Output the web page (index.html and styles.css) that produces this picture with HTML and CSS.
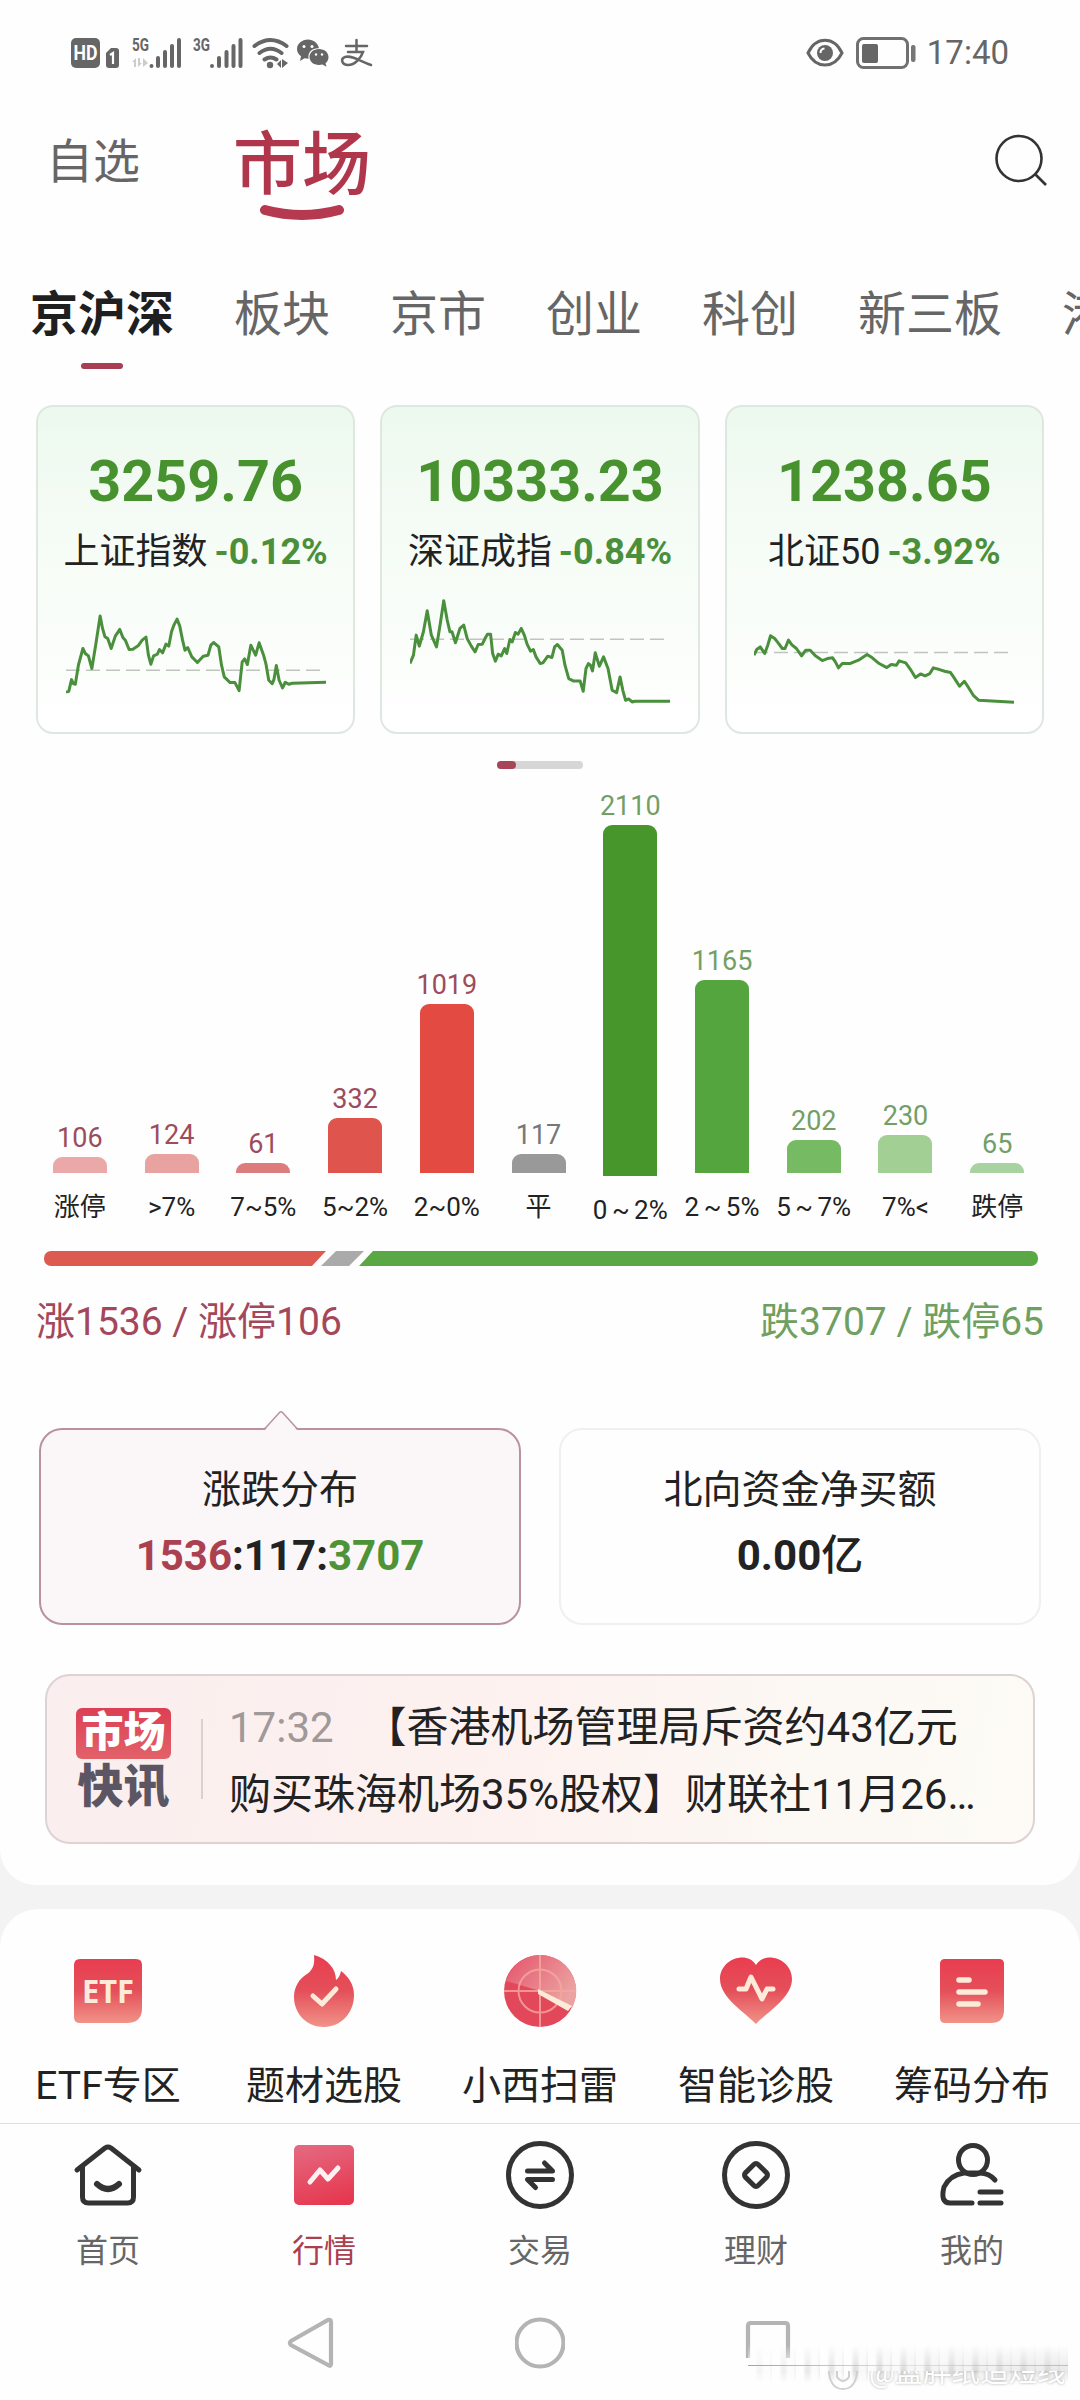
FILE: index.html
```html
<!DOCTYPE html>
<html lang="zh-CN">

<head>
    <meta charset="UTF-8">
    <meta name="viewport" content="width=device-width, initial-scale=1.0">
    <title>市场</title>
    <link rel="stylesheet" href="styles.css">
</head>

<body>
    <div class="panel">
        <div class="status">
            <svg class="status-left" width="320" height="36" viewBox="0 0 320 36">
                <rect x="1" y="3" width="29" height="30" rx="5" />
                <text class="hd" x="3.5" y="25" textLength="24" lengthAdjust="spacingAndGlyphs">HD</text>
                <path d="M36 18l5-5h5q3 0 3 3v14q0 3-3 3h-7q-3 0-3-3z" />
                <path d="M40 20l3-2v11" stroke="#fff" stroke-width="2.2" fill="none" />
                <text class="net" x="62" y="16" textLength="17" lengthAdjust="spacingAndGlyphs">5G</text>
                <path class="faint" d="M62 27l4-4v9h-2v-5zM68 23h2v5h2l-4 4zM73 23l5 5-5 4z" />
                <path class="bars" d="M81.500 31v0M88 23v8M95 17v14M102 11v20M109 5v26" />
                <text class="net" x="123" y="16" textLength="17" lengthAdjust="spacingAndGlyphs">3G</text>
                <path class="bars" d="M142 31v0M149 23v8M156.500 17v14M163.500 11v20M170.500 5v26" />
                <path class="wifi" d="M184.500 11q16-12 32 0M189.500 18q11-8.500 22 0M194.500 24.500q6-4 12 0" />
                <circle cx="200" cy="30" r="3.200" />
                <path d="M207 29l4-4v8zM212 24v9l6-5z" />
                <path d="M238 4.500c-6 0-11 4.300-11 9.500 0 3 1.500 5.500 4 7.300l-1 4.700 4.500-2.700 4 .5c-1-7 4-11 10.500-10.600-1-5-5.500-8.700-11-8.700z" />
                <path d="M249 14c-5.500 0-9.500 3.600-9.500 8s4 8 9.500 8l3.500-.6 4 2.400-1-3.600c2-1.500 3-3.600 3-6.200 0-4.400-4-8-9.500-8z" />
                <g fill="#fff">
                    <circle cx="234" cy="11.500" r="1.500" />
                    <circle cx="242" cy="11.500" r="1.500" />
                    <circle cx="246" cy="19.500" r="1.200" />
                    <circle cx="252" cy="19.500" r="1.200" />
                </g>
                <path class="pay" d="M276 11h21M286.500 5v12M278 17h15c-2 6-8 13-15 13-6 0-8-6-3-8 7-2 15 4 26 8" />
            </svg>
            <div class="status-right">
                <svg width="38" height="30" viewBox="0 0 38 30">
                    <path d="M2 15C10-2 28-2 36 15 28 31 10 31 2 15z" fill="none" stroke="#666" stroke-width="3" />
                    <circle cx="19" cy="15" r="8" fill="#666" />
                    <path d="M14.500 15q0-4 4-4.500" fill="none" stroke="#fff" stroke-width="2" />
                </svg>
                <svg class="battery" width="60" height="32" viewBox="0 0 60 32">
                    <rect x="1.500" y="1.500" width="50" height="29" rx="6" fill="none" stroke="#707070" stroke-width="3" />
                    <rect x="6" y="7" width="16" height="19" rx="2" fill="#666" />
                    <rect x="55" y="8" width="4.500" height="17" rx="2" fill="#777" />
                </svg>
                <span class="time">17:40</span>
            </div>
        </div>

        <div class="header">
            <a class="self">自选</a>
            <a class="market">市场
                <svg width="84" height="16" viewBox="0 0 84 16">
                    <path d="M5 5q37 10 74 0" fill="none" stroke="#b5394f" stroke-width="10" stroke-linecap="round" />
                </svg>
            </a>
            <svg class="search" width="50" height="50" viewBox="0 0 50 50">
                <circle cx="24" cy="23.500" r="22.500" />
                <path d="M40 39l11 11" />
            </svg>
        </div>

        <ul class="tabs">
            <li class="on">京沪深</li>
            <li>板块</li>
            <li>京市</li>
            <li>创业</li>
            <li>科创</li>
            <li>新三板</li>
            <li>港股</li>
        </ul>

        <div class="cards">
            <div class="card">
                <strong>3259.76</strong>
                <p>上证指数 <b>-0.12%</b></p>
                <svg viewBox="0 0 754 350" preserveAspectRatio="none">
                    <path class="dash" d="M0 240H754" />
                    <polyline points="0,305 8,303 16,268 21,280 27,282 36,225 49,175 56,190 65,197 75,235 86,165 99,78 106,115 113,140 121,145 131,175 143,138 156,118 165,142 172,150 183,178 194,177 210,166 221,150 232,141 239,195 246,222 254,197 265,192 271,178 280,188 290,162 298,168 306,125 313,105 322,87 330,108 338,150 345,180 353,172 365,200 381,217 398,198 412,195 420,165 428,157 443,170 451,225 459,260 476,277 490,277 502,301 511,215 518,206 526,223 536,165 550,195 560,158 573,195 580,222 588,270 598,280 603,268 610,226 618,270 628,293 636,276 646,282 656,279 754,276" />
                </svg>
            </div>
            <div class="card">
                <strong>10333.23</strong>
                <p>深证成指 <b>-0.84%</b></p>
                <svg viewBox="0 0 755 350" preserveAspectRatio="none">
                    <path class="dash" d="M0 147H755" />
                    <polyline points="0,220 10,195 18,135 27,168 39,125 50,62 62,135 77,170 88,100 98,32 108,90 116,125 122,125 132,158 145,115 156,105 166,145 178,168 189,185 198,163 210,162 218,145 225,132 234,132 240,190 248,213 256,192 265,197 275,175 281,190 290,148 297,155 306,127 314,132 323,115 332,135 340,162 350,183 358,178 366,200 378,220 386,218 400,198 412,202 420,170 428,163 442,180 450,225 461,265 474,272 494,272 503,303 511,235 518,220 524,225 530,242 538,188 550,228 562,200 575,235 587,300 600,307 610,260 618,300 626,330 635,326 645,335 653,333 755,333" />
                </svg>
            </div>
            <div class="card">
                <strong>1238.65</strong>
                <p>北证50 <b>-3.92%</b></p>
                <svg viewBox="0 0 754 350" preserveAspectRatio="none">
                    <path class="dash" d="M0 187H754" />
                    <polyline points="0,195 8,178 18,170 31,190 40,165 48,137 60,145 70,158 82,175 90,175 100,150 110,164 123,175 138,197 150,180 163,180 178,197 198,211 213,205 228,203 236,215 245,233 256,220 278,220 303,210 328,193 343,203 363,220 385,232 398,223 413,225 421,212 440,218 454,238 468,262 483,251 496,257 510,250 520,233 538,238 553,243 570,247 580,262 596,288 610,273 621,290 636,315 652,330 754,336" />
                </svg>
            </div>
        </div>
        <div class="pager"><i></i></div>

        <div class="chart">
            <div class="col up"><span>106</span><i style="height: 16px; background: #eaa8a8"></i><em>涨停</em></div>
            <div class="col up"><span>124</span><i style="height: 19px; background: #e8a3a1"></i><em>&gt;7%</em></div>
            <div class="col up"><span>61</span><i style="height: 10px; background: #dc7c7c"></i><em>7~5%</em></div>
            <div class="col up"><span>332</span><i style="height: 55px; background: #df544c"></i><em>5~2%</em></div>
            <div class="col up"><span>1019</span><i style="height: 169px; background: #e24a42"></i><em>2~0%</em></div>
            <div class="col flat"><span>117</span><i style="height: 19px; background: #999"></i><em>平</em></div>
            <div class="col down most"><span>2110</span><i style="height: 351px; background: #47962b"></i><em>0 ~ 2%</em></div>
            <div class="col down"><span>1165</span><i style="height: 193px; background: #55a53e"></i><em>2 ~ 5%</em></div>
            <div class="col down"><span>202</span><i style="height: 33px; background: #76bb64"></i><em>5 ~ 7%</em></div>
            <div class="col down"><span>230</span><i style="height: 38px; background: #a1cf94"></i><em>7%&lt;</em></div>
            <div class="col down"><span>65</span><i style="height: 10px; background: #a8d2a0"></i><em>跌停</em></div>
        </div>
        <div class="ratio">
            <i class="r-up"></i>
            <i class="r-flat"></i>
            <i class="r-down"></i>
        </div>
        <div class="summary">
            <span class="t-up">涨1536 / 涨停106</span>
            <span class="t-down">跌3707 / 跌停65</span>
        </div>

        <div class="boxes">
            <div class="box active">
                <svg class="peak" width="34" height="20" viewBox="0 0 34 20">
                    <path d="M1 20h32L17 2z" fill="#fbf6f8" />
                    <path d="M0 18.500h1L15.500 2.500q1.500-1.500 3 0L33 18.500h1" fill="none" stroke="#b8929d" stroke-width="1.500" />
                </svg>
                <p>涨跌分布</p>
                <strong><span class="c-red">1536</span>:117:<span class="c-green">3707</span></strong>
            </div>
            <div class="box">
                <p>北向资金净买额</p>
                <strong>0.00<span class="unit">亿</span></strong>
            </div>
        </div>

        <div class="news">
            <div class="news-logo">
                <b>市场</b>
                <span>快讯</span>
            </div>
            <p><time>17:32</time>【香港机场管理局斥资约43亿元<br>购买珠海机场35%股权】财联社11月26…</p>
        </div>
    </div>

    <div class="panel tools">
        <svg width="0" height="0" class="defs">
            <defs>
                <linearGradient id="red" x1="0" y1="0" x2="0" y2="1">
                    <stop offset="0" stop-color="#e93d50" />
                    <stop offset=".5" stop-color="#e4505a" />
                    <stop offset="1" stop-color="#f19389" />
                </linearGradient>
                <linearGradient id="nav" x1="0.300" y1="0" x2="0.600" y2="1">
                    <stop offset="0" stop-color="#e4677f" />
                    <stop offset="1" stop-color="#e6384f" />
                </linearGradient>
                <linearGradient id="scan" x1="0" y1="0" x2="1" y2="0.600">
                    <stop offset="0" stop-color="#e4536a" />
                    <stop offset="1" stop-color="#eba3a2" />
                </linearGradient>
            </defs>
        </svg>
        <a class="tool">
            <svg width="74" height="74" viewBox="0 0 74 74">
                <path d="M9 5h56q6 0 6 6v43q0 15-15 15H9q-6 0-6-6V11q0-6 6-6z" fill="url(#red)" />
                <text class="etf" x="11" y="49" textLength="52" lengthAdjust="spacingAndGlyphs">ETF</text>
            </svg>
            ETF专区
        </a>
        <a class="tool">
            <svg width="74" height="74" viewBox="0 0 74 74">
                <path d="M27 1c14 4 22 14 22 25 3-2 4-5 5-9 8 6 13 14 13 24 0 18-13 32-30 32S7 60 7 43c0-10 5-18 13-23 6-4 8-10 7-19z" fill="url(#red)" />
                <path d="M26 42l9 8 14-15" class="cream" stroke-width="5" />
            </svg>
            题材选股
        </a>
        <a class="tool">
            <svg width="74" height="74" viewBox="0 0 74 74">
                <circle cx="37" cy="37" r="36" fill="#e2475a" />
                <path d="M37 37L69 54A36 36 0 0 0 37 1 36 36 0 0 0 3 27z" fill="url(#scan)" />
                <g fill="none" stroke="#f5a9a0" stroke-width="2" opacity=".8">
                    <circle cx="37" cy="37" r="21.500" />
                    <path d="M1 37h72M37 1v72" />
                </g>
                <path d="M35 35l34 17-4 5-30-17z" fill="#fdebd9" />
            </svg>
            小西扫雷
        </a>
        <a class="tool">
            <svg width="74" height="74" viewBox="0 0 74 74">
                <path d="M37 70C27 59 1 44 1 25 1 5 28-4 37 11 46-4 73 5 73 25c0 19-26 34-36 45z" fill="url(#red)" />
                <path d="M20 35h7l5-12 11 22 5-10h6" class="cream" stroke-width="5" />
            </svg>
            智能诊股
        </a>
        <a class="tool">
            <svg width="74" height="74" viewBox="0 0 74 74">
                <path d="M10 5h54q5 0 5 5v46q0 13-13 13H10q-5 0-5-5V10q0-5 5-5z" fill="url(#red)" />
                <path d="M24 26h10M24 38h26M24 50h19" class="cream" stroke-width="5.500" />
            </svg>
            筹码分布
        </a>
    </div>

    <div class="tabbar">
        <a>
            <svg width="70" height="70" viewBox="0 0 70 70">
                <path d="M4 30L32 8q3-2 6 0l28 22M9.500 27v30q0 6 6 6h39q6 0 6-6V27" />
                <path d="M24 44q11 10 22 0" stroke-width="6" />
            </svg>
            首页
        </a>
        <a class="on">
            <svg width="70" height="70" viewBox="0 0 70 70">
                <rect x="5" y="5" width="60" height="60" rx="5" fill="url(#nav)" stroke="none" />
                <path d="M21 42l10-12 8 9 10-11" stroke="#fff0f2" stroke-width="5" />
            </svg>
            行情
        </a>
        <a>
            <svg width="70" height="70" viewBox="0 0 70 70">
                <circle cx="35" cy="35" r="31.500" />
                <path d="M22.500 31h25l-8-8M47.500 39.500h-25l8 8" />
            </svg>
            交易
        </a>
        <a>
            <svg width="70" height="70" viewBox="0 0 70 70">
                <circle cx="35" cy="35" r="31.500" />
                <rect x="26" y="26" width="18" height="18" rx="3" transform="rotate(45 35 35)" />
            </svg>
            理财
        </a>
        <a>
            <svg width="70" height="70" viewBox="0 0 70 70">
                <circle cx="36" cy="20" r="14.500" />
                <path d="M58 40Q52 33 43 33H27Q13 35 7 47 3 63 13 63H35M43 52h21M43 63h21" />
            </svg>
            我的
        </a>
    </div>

    <div class="sysnav">
        <svg width="50" height="56" viewBox="0 0 50 56"><path d="M5 26L42 5q3-1 3 2v42q0 3-3 1L5 30q-2-2 0-4z" /></svg>
        <svg width="50" height="56" viewBox="0 0 50 56"><circle cx="25" cy="28" r="23.500" /></svg>
        <svg width="50" height="56" viewBox="0 0 50 56"><path d="M4 43V11q0-3 3-3h34q3 0 3 3v32" /></svg>
        <div class="mark">
            <i></i>
            <svg width="32" height="34" viewBox="0 0 32 34"><path d="M2 4v12q2 16 14 16t14-16V4M10 4v16q6 8 12 0V4" /></svg>
            <span>@蓝胖纸追短线</span>
        </div>
    </div>
</body>

</html>
```
FILE: styles.css
```css
* {
    box-sizing: border-box;
}

body {
    margin: 0;
    width: 1080px;
    height: 2400px;
    overflow: hidden;
    background: #f3f3f3;
    color: #222;
    font-family: Roboto, "Noto Sans CJK SC", sans-serif;
}

p,
ul {
    margin: 0;
    padding: 0;
}

i,
em {
    font-style: normal;
}

svg {
    display: block;
}

.panel {
    background: #fefefe;
}

.panel:first-child {
    height: 1885px;
    border-radius: 0 0 36px 36px;
}

/* 状态栏 */
.status {
    display: flex;
    justify-content: space-between;
    align-items: center;
    height: 106px;
    padding: 0 71px 0 70px;
}

.status-left {
    overflow: visible;
    fill: #666;
}

.hd {
    fill: #fff;
    font-size: 20px;
    font-weight: 700;
}

.net {
    font-size: 18px;
    font-weight: 700;
}

.faint {
    fill: #ccc;
}

.bars,
.wifi,
.pay {
    fill: none;
    stroke: #666;
    stroke-width: 4;
    stroke-linecap: round;
}

.pay {
    stroke-width: 2.5;
}

.status-right {
    display: flex;
    align-items: center;
}

.battery {
    margin: 0 11px 0 12px;
}

.time {
    color: #666;
    font-size: 33px;
    line-height: 40px;
}

/* 顶部 */
.header {
    display: flex;
    align-items: center;
    height: 112px;
    padding: 0 35px 0 46px;
    color: #666;
    font-size: 47px;
}

.self {
    margin-top: -10px;
}

.market {
    position: relative;
    margin: 7px 0 0 93px;
    color: #b0364b;
    font-size: 69px;
    font-weight: 500;
    line-height: 80px;
}

.market svg {
    position: absolute;
    left: 27px;
    top: 79px;
}

.search {
    margin: -5px 0 0 auto;
    overflow: visible;
    fill: none;
    stroke: #333;
    stroke-width: 2.6;
}

.tabs {
    display: flex;
    gap: 60px;
    height: 187px;
    padding: 67px 0 0 30px;
    overflow: hidden;
    list-style: none;
    white-space: nowrap;
    color: #666;
    font-size: 48px;
    line-height: 60px;
}

.tabs .on {
    color: #1f1f1f;
    font-weight: 700;
}

.tabs .on::after {
    content: "";
    display: block;
    width: 42px;
    height: 6px;
    margin: 18px auto 0;
    border-radius: 3px;
    background: #a83e52;
}

/* 指数卡片 */
.cards {
    display: grid;
    grid-template-columns: repeat(3, 1fr);
    gap: 25px;
    padding: 0 36px;
}

.card {
    height: 329px;
    padding-top: 43px;
    border: 2px solid #dfe8e0;
    border-radius: 17px;
    background: linear-gradient(#ecf9ee, #f4fbf4 30%, #f9fdf9 65%, #fff);
    text-align: center;
}

.card strong {
    display: block;
    color: #47912f;
    font-size: 57.5px;
    line-height: 64px;
}

.card p {
    margin-top: 16px;
    font-size: 36px;
    line-height: 44px;
    white-space: nowrap;
}

.card b {
    margin-left: -2px;
    color: #4a8f3a;
}

.card svg {
    width: 260px;
    height: 117px;
    margin: 16px auto 0;
    fill: none;
}

.card polyline {
    stroke: #4a8f3c;
    stroke-width: 3;
    stroke-linejoin: round;
    vector-effect: non-scaling-stroke;
}

.dash {
    stroke: #bfc4bf;
    stroke-width: 1.5;
    stroke-dasharray: 14 6;
    vector-effect: non-scaling-stroke;
}

.pager {
    width: 86px;
    height: 8px;
    margin: 27px auto 0;
    border-radius: 4px;
    background: #d6d6d6;
}

.pager i {
    display: block;
    width: 19px;
    height: 8px;
    border-radius: 4px;
    background: #a9455a;
}

/* 涨跌分布 */
.chart {
    display: flex;
    align-items: flex-end;
    height: 456px;
    padding: 0 37px 0 34px;
}

.col {
    flex: 1;
    display: flex;
    flex-direction: column;
    align-items: center;
    white-space: nowrap;
}

.col span {
    margin-bottom: 3px;
    font-size: 27px;
    line-height: 31px;
}

.col i {
    width: 54px;
    border-radius: 9px 9px 0 0;
}

.col em {
    margin-top: 16px;
    font-size: 26px;
    line-height: 36px;
    word-spacing: -2px;
}

.up span {
    color: #9c4c5d;
}

.flat span {
    color: #777;
}

.down span {
    color: #739f66;
}

.most {
    margin-bottom: -3px;
}

.ratio {
    display: flex;
    height: 15px;
    margin: 26px 42px 0 44px;
}

.r-up {
    width: 282px;
    border-radius: 7px 0 0 7px;
    background: #dd5a51;
    clip-path: polygon(0 0, 100% 0, 268px 100%, 0 100%);
}

.r-flat {
    width: 43px;
    margin-left: -5px;
    background: #aaa;
    clip-path: polygon(15px 0, 100% 0, 28px 100%, 0 100%);
}

.r-down {
    flex: 1;
    margin-left: -5px;
    border-radius: 0 7px 7px 0;
    background: #5aa746;
    clip-path: polygon(14px 0, 100% 0, 100% 100%, 0 100%);
}

.summary {
    display: flex;
    justify-content: space-between;
    padding: 30px 36px 0;
    font-size: 39px;
    line-height: 52px;
}

.t-up {
    color: #a5475a;
}

.t-down {
    color: #6fa05f;
}

.boxes {
    display: grid;
    grid-template-columns: 1fr 1fr;
    gap: 38px;
    margin-top: 80px;
    padding: 0 39px;
}

.box {
    position: relative;
    height: 197px;
    padding-top: 32px;
    border: 2px solid #f0f0f0;
    border-radius: 23px;
    text-align: center;
}

.box p {
    font-size: 39px;
    line-height: 56px;
}

.box strong {
    display: block;
    margin-top: 8px;
    font-size: 42px;
    line-height: 60px;
}

.active {
    border-color: #b8929d;
    background: #fbf6f8;
}

.peak {
    position: absolute;
    left: 223px;
    top: -20px;
}

.c-red {
    color: #ab4150;
}

.c-green {
    color: #4f9339;
}

.unit {
    font-weight: 500;
}

.news {
    display: flex;
    align-items: center;
    height: 170px;
    margin: 49px 45px 0;
    padding-left: 29px;
    border: 2px solid #dfd2d4;
    border-radius: 25px;
    background: linear-gradient(100deg, #faeeee, #fdf2f0 50%, #fcf8f4 75%, #fdfbf5);
}

.news-logo {
    width: 95px;
    padding-top: 3px;
    text-align: center;
    font-weight: 900;
    font-size: 46px;
    line-height: 54px;
    color: #5c5664;
}

.news-logo b {
    display: block;
    height: 51px;
    border-radius: 6px;
    background: linear-gradient(#dc3f52, #e2626a);
    color: #fff;
    font-size: 42px;
    line-height: 50px;
}

.news-logo span {
    display: block;
}

.news p {
    margin-left: 30px;
    padding: 4px 0 0 28px;
    background: linear-gradient(#ddcfd0, #ddcfd0) 0 50% / 2px 80px no-repeat;
    font-size: 42px;
    line-height: 67px;
    white-space: nowrap;
}

.news time {
    margin-right: 31px;
    color: #a19899;
}

/* 功能入口 */
.tools {
    display: flex;
    height: 214px;
    margin-top: 24px;
    border-radius: 38px 38px 0 0;
}

.defs {
    position: absolute;
}

.tool {
    flex: 1;
    padding-top: 45px;
    text-align: center;
    font-size: 39px;
    line-height: 56px;
}

.tool svg {
    margin: 0 auto 30px;
}

.etf {
    fill: #fdebd9;
    font-family: "Noto Sans", sans-serif;
    font-size: 33px;
    font-weight: 700;
}

.cream {
    fill: none;
    stroke: #fdebd9;
    stroke-linecap: round;
    stroke-linejoin: round;
}

.tabbar {
    display: flex;
    height: 157px;
    border-top: 1px solid #dedede;
    background: #fefefe;
}

.tabbar a {
    flex: 1;
    padding-top: 16px;
    text-align: center;
    color: #666;
    font-size: 32px;
    line-height: 44px;
}

.tabbar svg {
    margin: 0 auto 19px;
    fill: none;
    stroke: #333;
    stroke-width: 5;
    stroke-linecap: round;
    stroke-linejoin: round;
}

.tabbar .on {
    color: #ab3f52;
}

/* 系统导航键 */
.sysnav {
    position: relative;
    display: flex;
    justify-content: center;
    gap: 179px;
    height: 120px;
    padding-top: 35px;
    background: #fefefe;
}

.sysnav > svg {
    fill: none;
    stroke: #b4b4b4;
    stroke-width: 4.2;
}

.mark {
    position: absolute;
    left: 748px;
    top: 65px;
    display: flex;
    align-items: flex-end;
    width: 322px;
    height: 46px;
    padding-left: 79px;
    white-space: nowrap;
}

.mark i {
    position: absolute;
    left: 0;
    top: 0;
    width: 320px;
    height: 38px;
    background:
        linear-gradient(90deg, #888, rgba(180, 180, 180, .4) 50%, rgba(130, 130, 130, .6)) 0 20px / 100% 1px no-repeat,
        linear-gradient(90deg, rgba(254, 254, 254, .8), rgba(254, 254, 254, 0) 35%),
        linear-gradient(90deg, transparent 30%, rgba(205, 205, 205, .45)),
        repeating-linear-gradient(90deg, #fefefe 0 7px, #dcdcdc 10px 13px, #fafafa 16px 21px, #e4e4e4 24px);
    -webkit-mask-image: linear-gradient(transparent, #000 70%, transparent);
    mask-image: linear-gradient(transparent, #000 70%, transparent);
}

.mark svg {
    position: relative;
    fill: none;
    stroke: #d0d0d0;
    stroke-width: 2;
    clip-path: inset(14px 0 0 0);
}

.mark span {
    position: relative;
    margin-left: 10px;
    color: #fff;
    font-size: 28.5px;
    line-height: 36px;
    text-shadow: 0 0 3px #aaa;
    clip-path: inset(16px 0 0 0);
}
```
